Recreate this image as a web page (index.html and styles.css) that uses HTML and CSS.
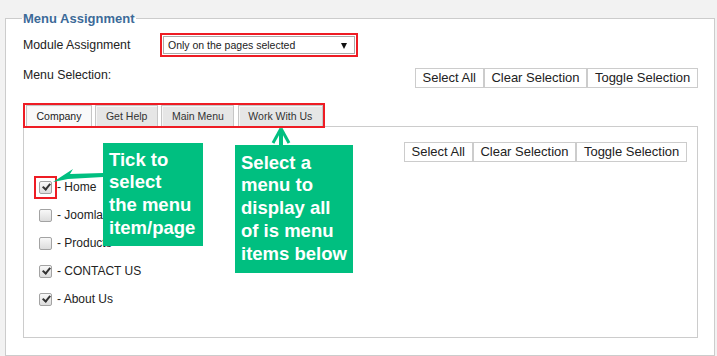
FILE: index.html
```html
<!DOCTYPE html>
<html lang="en">
<head>
<meta charset="utf-8">
<title>Menu Assignment</title>
<link rel="stylesheet" href="styles.css">
</head>
<body>
<fieldset class="assign">
  <legend class="assign-title">Menu Assignment</legend>
  <div class="form-row">
    <label class="field-label">Module Assignment</label>
    <div class="hl-box">
      <div class="select-box"><span class="select-text">Only on the pages selected</span><span class="select-arrow"></span></div>
    </div>
  </div>
  <div class="sel-row">
    <span class="field-label top">Menu Selection:</span>
    <div class="btn-group">
      <button class="btn">Select All</button><button class="btn">Clear Selection</button><button class="btn">Toggle Selection</button>
    </div>
  </div>
  <div class="tabs">
    <span class="tab active">Company</span>
    <span class="tab">Get Help</span>
    <span class="tab">Main Menu</span>
    <span class="tab">Work With Us</span>
  </div>
  <div class="panel">
    <div class="panel-actions">
      <div class="btn-group">
        <button class="btn">Select All</button><button class="btn">Clear Selection</button><button class="btn">Toggle Selection</button>
      </div>
    </div>
    <ul class="items">
      <li class="item"><span class="cb-mark"><input type="checkbox" class="cb" checked></span><span>- Home</span></li>
      <li class="item"><input type="checkbox" class="cb gap"><span>- Joomla!</span></li>
      <li class="item"><input type="checkbox" class="cb gap"><span>- Products</span></li>
      <li class="item"><input type="checkbox" class="cb gap" checked><span>- CONTACT US</span></li>
      <li class="item"><input type="checkbox" class="cb gap" checked><span>- About Us</span></li>
    </ul>
    <div class="callout callout-tick">Tick to<br>select<br>the menu<br>item/page</div>
    <div class="callout callout-menu">Select a<br>menu to<br>display all<br>of is menu<br>items below</div>
    <svg class="arrows" aria-hidden="true">
      <polygon class="arrow-fill" points="29,55 49,42 46,47 79,46 79,50 44,52"/>
      <line class="arrow-line shaft" x1="257" y1="3" x2="257" y2="18"/>
      <line class="arrow-line" x1="257" y1="1.5" x2="249" y2="16"/>
      <line class="arrow-line" x1="257" y1="1.5" x2="265" y2="16"/>
    </svg>
  </div>
</fieldset>
</body>
</html>
```
FILE: styles.css
```css
html, body {
  margin: 0;
}
body {
  background: #f2f2f2;
  font-family: "Liberation Sans", Arial, sans-serif;
  color: #222;
  height: 356px;
  overflow: hidden;
  padding: 11px 0 0 5px;
  box-sizing: border-box;
}
.assign {
  margin: 0;
  width: 710px;
  box-sizing: border-box;
  border: 1px solid #ccc;
  background: #fff;
  padding: 7px 16px 17px 17px;
  min-inline-size: auto;
}
.assign-title {
  font-weight: bold;
  font-size: 13px;
  line-height: 15px;
  color: #3c6a98;
  padding: 0 2px 0 1px;
  margin-left: -1px;
}
.form-row {
  display: flex;
  align-items: center;
  height: 24px;
}
.field-label {
  width: 137px;
  font-size: 12.3px;
  line-height: 14px;
  color: #222;
}
.hl-box {
  border: 2px solid #ee1c24;
  padding: 1px;
}
.select-box {
  width: 192px;
  height: 18px;
  box-sizing: border-box;
  border: 1px solid #aaa;
  display: flex;
  align-items: center;
  justify-content: space-between;
  padding: 0 7px 0 4px;
  font-size: 10.5px;
  color: #222;
  background: #fff;
}
.select-arrow {
  width: 0;
  height: 0;
  border-left: 3.5px solid transparent;
  border-right: 3.5px solid transparent;
  border-top: 6px solid #111;
  margin-top: 1px;
}
.sel-row {
  display: flex;
  justify-content: space-between;
  align-items: flex-start;
  margin-top: 11px;
}
.btn-group {
  display: flex;
}
.btn {
  font-family: "Liberation Sans", Arial, sans-serif;
  font-size: 13px;
  height: 20px;
  line-height: 18px;
  padding: 0 6.7px;
  margin: 0;
  border: 1px solid #ccc;
  background: #fff;
  color: #222;
}
.tabs {
  display: flex;
  gap: 3.5px;
  width: fit-content;
  height: 21px;
  margin: 17px 0 0 2px;
  padding-left: 1px;
  outline: 2px solid #ee1c24;
  position: relative;
  z-index: 1;
}
.tab {
  font-size: 10.5px;
  line-height: 20px;
  height: 21px;
  box-sizing: border-box;
  padding: 0 9.5px;
  border: 1px solid #c6c6c6;
  border-bottom: none;
  background: #e6e6e6;
  box-shadow: inset 1px 1px 0 #f6f6f6;
  color: #333;
}
.tab.active {
  background: #f9f9f9;
  color: #222;
}
.panel {
  position: relative;
  border: 1px solid #ccc;
  padding: 15px 10px 24px 15px;
}
.panel-actions {
  display: flex;
  justify-content: flex-end;
}
.items {
  list-style: none;
  margin: 11px 0 0;
  padding: 0;
}
.item {
  height: 28px;
  display: flex;
  align-items: center;
  font-size: 12px;
  color: #222;
}
.cb {
  -webkit-appearance: none;
  appearance: none;
  width: 13px;
  height: 13px;
  margin: 0;
  box-sizing: border-box;
  border: 1px solid #a3a3a3;
  border-radius: 2px;
  background: linear-gradient(#f8f8f8, #dcdcdc);
  position: relative;
}
.cb.gap {
  margin-right: 5px;
}
.cb:checked::after {
  content: "";
  position: absolute;
  left: 3.5px;
  top: 0.5px;
  width: 3px;
  height: 6px;
  border: solid #333;
  border-width: 0 2.5px 2.5px 0;
  transform: rotate(40deg);
}
.cb-mark {
  display: inline-flex;
  margin-right: 5px;
  outline: 2px solid #ee1c24;
  outline-offset: 3px;
}
.callout {
  position: absolute;
  background: #00bf80;
  color: #fff;
  font-weight: bold;
  font-size: 18.5px;
  line-height: 22.8px;
  padding-left: 6px;
  box-sizing: border-box;
  white-space: nowrap;
}
.callout-tick {
  left: 79px;
  top: 16px;
  width: 100px;
  height: 103px;
  padding-top: 5.5px;
}
.callout-menu {
  left: 211px;
  top: 18px;
  width: 118px;
  height: 128px;
  padding-top: 6.5px;
}
.arrows {
  position: absolute;
  left: 0;
  top: 0;
  width: 100%;
  height: 100%;
  overflow: visible;
  pointer-events: none;
}
.arrow-fill {
  fill: #00bf80;
}
.arrow-line {
  stroke: #00bf80;
  stroke-width: 3;
}
.arrow-line.shaft {
  stroke-width: 4;
}
```
